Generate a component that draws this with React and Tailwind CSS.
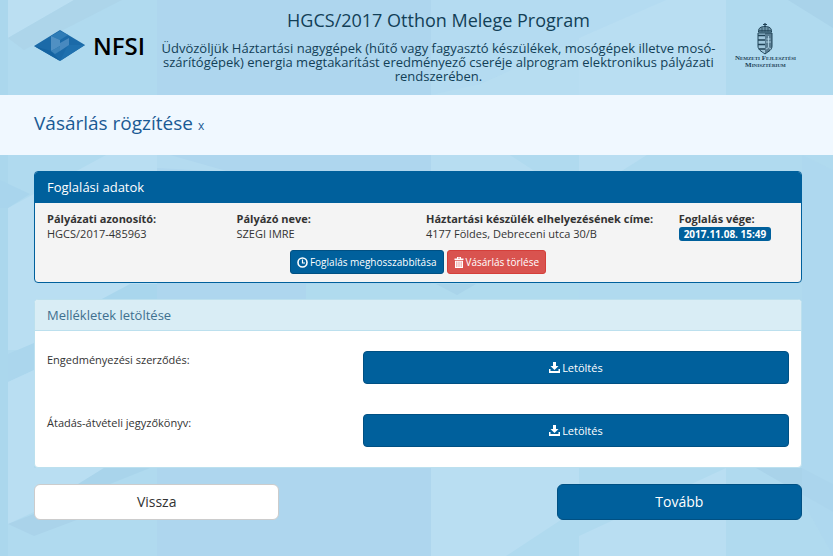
import clsx from "clsx";

const booking = [
  { label: "Pályázati azonosító:", value: "HGCS/2017-485963", span: "col-span-3" },
  { label: "Pályázó neve:", value: "SZEGI IMRE", span: "col-span-3" },
  { label: "Háztartási készülék elhelyezésének címe:", value: "4177 Földes, Debreceni utca 30/B", span: "col-span-4" },
];

const attachments = [
  { id: "contract", label: "Engedményezési szerződés:" },
  { id: "handover", label: "Átadás-átvételi jegyzőkönyv:" },
];

function Backdrop() {
  return (
    <svg
      className="absolute inset-0 -z-10 h-full w-full"
      viewBox="0 0 833 556"
      preserveAspectRatio="none"
      aria-hidden="true"
    >
      <rect width="833" height="556" fill="#b0daef" />
      <rect x="157" width="274" height="556" fill="#aed6ee" />
      <rect width="8" height="556" fill="#abd7ed" />
      <polygon points="8,0 74,0 8,38" fill="#bbdff2" />
      <polygon points="74,0 122,0 24,50 8,38" fill="#add5ea" />
      <polygon points="431,0 666,0 579,44 451,95 431,95" fill="#b4dbf1" />
      <polygon points="579,38 666,0 726,0 726,95 579,95" fill="#b9def2" />
      <polygon points="431,95 480,84 579,40 579,95" fill="#b7ddf1" />
      <polygon points="788,0 833,0 833,28" fill="#a9d3ea" />
      <polygon points="8,208 106,155 157,155 157,290 34,350 8,350" fill="#b9def2" />
      <polygon points="0,180 30,194 8,208 0,208" fill="#a9d5ed" />
      <polygon points="157,155 157,168 230,172 170,155" fill="#b4dbf0" />
      <polygon points="431,155 510,155 536,172 431,172" fill="#b7ddf1" />
      <polygon points="579,155 647,155 620,172 579,172" fill="#b9def2" />
      <polygon points="306,284 579,284 579,300 306,300" fill="#b0dbee" />
      <polygon points="436,284 476,284 457,295" fill="#a9d4ea" />
      <polygon points="100,300 130,284 157,284 157,300" fill="#a9d6ed" />
      <polygon points="8,354 34,343 34,370 8,382" fill="#abd6ed" />
      <polygon points="8,382 34,370 34,468 104,468 80,484 60,500 8,524" fill="#b9def2" />
      <polygon points="8,524 70,500 90,515 34,536" fill="#aad3ea" />
      <polygon points="104,468 150,468 110,484 78,484" fill="#a9d4eb" />
      <polygon points="431,468 579,468 579,508 506,556 431,556" fill="#b9def2" />
      <polygon points="579,536 726,468 726,556 579,556" fill="#b9def2" />
      <polygon points="756,468 802,468 833,484 833,512" fill="#a9d3ea" />
      <polygon points="802,155 833,170 833,556 802,500" fill="#add7ee" opacity="0.6" />
    </svg>
  );
}

function NfsiLogo() {
  return (
    <div className="flex items-center gap-2">
      <svg className="h-8 w-[51px]" viewBox="0 0 51 32" aria-hidden="true">
        <polygon points="0,16 26,0 51,15 26,31" fill="#1b6aa8" />
        <polygon points="0,16 17,21 26,31" fill="#1463a1" />
        <polygon points="26,31 34,15 51,15" fill="#1f70ae" />
        <polygon points="26,1 34,5 26,10 17,6" fill="#2f7cb6" />
        <polygon points="17,6 26,10 26,16 21,19 17,21" fill="#5090c3" />
        <polygon points="26,13 35,8 35,15 26,21" fill="#4889bf" />
        <polygon points="17,21 26,16 26,21 21,24" fill="#3d84ba" />
      </svg>
      <span className="text-2xl leading-8 font-semibold text-black">NFSI</span>
    </div>
  );
}

function MinistryLogo() {
  return (
    <div className="flex flex-col items-center text-[#1f4256]">
      <svg className="h-8 w-4" viewBox="0 0 16 32" fill="none" stroke="currentColor" aria-hidden="true">
        <path d="M8 0v4M6 1.5h4" strokeWidth="1.2" />
        <path d="M1.5 9C1 5 4 3.5 8 3.5S15 5 14.5 9z" fill="currentColor" fillOpacity=".45" />
        <path d="M2 7.5h12M5 4.5v4M8 3.5v5M11 4.5v4" strokeWidth=".7" />
        <path d="M1 10h14v13c0 4-3 5-7 8-4-3-7-4-7-8z" fill="#9fc6db" strokeWidth="1" />
        <path d="M8 10h7v13c0 4-3 5-7 8z" fill="currentColor" fillOpacity=".55" stroke="none" />
        <path d="M1 12.5h7M1 17h7M1 21.5h7M2 26h6" strokeWidth="1.7" />
        <path d="M11.5 13v11M9.5 16h4M9 19h5M9 26q2.5-3 5 0" stroke="#b9dcee" strokeWidth=".8" />
      </svg>
      <p className="whitespace-nowrap text-center font-['Liberation_Serif',serif] text-[7px] leading-[7px] font-bold [font-variant:small-caps]">
        Nemzeti Fejlesztési
        <br />
        Minisztérium
      </p>
    </div>
  );
}

function ClockIcon() {
  return (
    <svg className="size-[11px]" viewBox="0 0 11 11" fill="none" stroke="currentColor" aria-hidden="true">
      <circle cx="5.5" cy="5.5" r="4.5" strokeWidth="1.6" />
      <path d="M5.5 2.5v3.5h2.5" strokeWidth="1.2" />
    </svg>
  );
}

function TrashIcon() {
  return (
    <svg className="h-[11px] w-[10px]" viewBox="0 0 10 11" fill="currentColor" aria-hidden="true">
      <path d="M3 0h4v1.5h2.5V3h-9V1.5H3zM4 .8v.7h2V.8z" fillRule="evenodd" />
      <path d="M1 3.7h8V11H1zM2.6 4.5v5.5h.6V4.500zM4.7 4.5v5.5h.6V4.500zM6.8 4.5v5.5h.6V4.500z" fillRule="evenodd" />
    </svg>
  );
}

function DownloadIcon() {
  return (
    <svg className="size-[11px]" viewBox="0 0 11 11" fill="currentColor" aria-hidden="true">
      <path d="M4 0h3v4h2.5l-4 4-4-4H4z" />
      <path d="M0 7h1.5v2h8V7H11v4H0z" />
    </svg>
  );
}

function Button({ className, children, ...props }) {
  return (
    <button
      type="button"
      className={clsx("flex cursor-pointer items-center justify-center border", className)}
      {...props}
    >
      {children}
    </button>
  );
}

export default function App() {
  return (
    <div className="relative isolate min-h-screen font-['Open_Sans',sans-serif] text-[11px] leading-[15px] text-[#333]">
      <Backdrop />

      {/* Header */}
      <header className="flex min-h-[95px] items-start pr-[37px] pl-[34px]">
        <div className="w-[124px] shrink-0 pt-[30px]">
          <NfsiLogo />
        </div>
        <div className="min-w-0 flex-1 pt-2 text-center text-[#123f57]">
          <h1 className="text-lg leading-6">HGCS/2017 Otthon Melege Program</h1>
          <p className="mt-[9px] text-[13px] leading-[14px]">
            Üdvözöljük Háztartási nagygépek (hűtő vagy fagyasztó készülékek, mosógépek illetve
            mosó-szárítógépek) energia megtakarítást eredményező cseréje alprogram elektronikus
            pályázati rendszerében.
          </p>
        </div>
        <div className="ml-4 shrink-0 pt-[23px]">
          <MinistryLogo />
        </div>
      </header>

      {/* Page title */}
      <div className="flex h-[60px] items-center bg-[#f0f8ff] px-[34px]">
        <h2 className="text-[19px] text-[#1a5a94]">
          Vásárlás rögzítése{" "}
          <a href="#" className="text-xs">x</a>
        </h2>
      </div>

      <main className="flex flex-col gap-4 pt-4 pr-[31px] pb-9 pl-[34px]">
        {/* Booking data */}
        <section className="overflow-hidden rounded border border-[#00609c] bg-[#f4f4f4]">
          <h3 className="bg-[#00609c] px-3 py-2 text-[13px] text-white">Foglalási adatok</h3>
          <div className="px-1 py-2">
            <dl className="grid grid-cols-12">
              {booking.map((item) => (
                <div key={item.label} className={clsx("px-2", item.span)}>
                  <dt className="font-bold whitespace-nowrap">{item.label}</dt>
                  <dd>{item.value}</dd>
                </div>
              ))}
              <div className="col-span-2 px-2">
                <dt className="font-bold">Foglalás vége:</dt>
                <dd className="flex pt-px">
                  <span className="rounded-[3px] bg-[#00609c] px-[5px] text-[10px] leading-[14px] font-bold text-white">
                    2017.11.08. 15:49
                  </span>
                </dd>
              </div>
            </dl>
            <div className="mt-[9px] flex justify-center gap-[3px] text-[10px] text-white">
              <Button className="h-6 gap-[2px] rounded-[3px] border-[#005083] bg-[#00609c] px-[6px]">
                <ClockIcon />
                Foglalás meghosszabbítása
              </Button>
              <Button className="h-6 gap-[2px] rounded-[3px] border-[#d43f3a] bg-[#d9534f] px-[6px]">
                <TrashIcon />
                Vásárlás törlése
              </Button>
            </div>
          </div>
        </section>

        {/* Attachments */}
        <section className="overflow-hidden rounded border border-[#bce0ee] bg-white">
          <h3 className="border-b border-[#bce0ee] bg-[#d9edf5] px-3 pt-2 pb-[7px] text-[13px] text-[#3f708f]">
            Mellékletek letöltése
          </h3>
          <div className="flex flex-col gap-[30px] px-1 py-5">
            {attachments.map((item) => (
              <div key={item.id} className="grid grid-cols-12">
                <span id={item.id} className="col-span-5 px-2 pt-px">{item.label}</span>
                <div className="col-span-7 px-2">
                  <Button
                    aria-describedby={item.id}
                    className="h-[33px] w-full gap-[2px] rounded border-[#005083] bg-[#00609c] text-white"
                  >
                    <DownloadIcon />
                    Letöltés
                  </Button>
                </div>
              </div>
            ))}
          </div>
        </section>

        {/* Navigation */}
        <nav className="grid grid-cols-3 gap-4 text-sm">
          <Button className="h-9 rounded-md border-[#ccc] bg-white">Vissza</Button>
          <Button className="col-start-3 h-9 rounded-md border-[#005083] bg-[#00609c] text-white">
            Tovább
          </Button>
        </nav>
      </main>
    </div>
  );
}
